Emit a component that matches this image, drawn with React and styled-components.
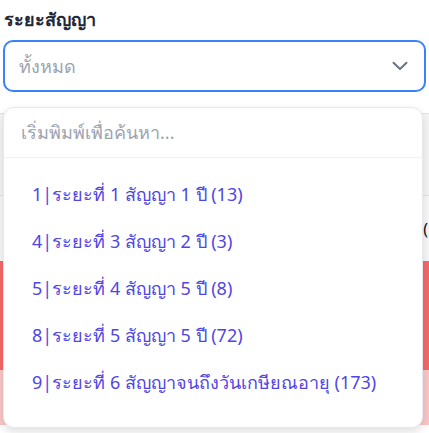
import React from "react";
import styled, { createGlobalStyle } from "styled-components";

const Global = createGlobalStyle`
  html, body { margin: 0; padding: 0; background: #ffffff; }
  body { font-family: "Noto Sans", sans-serif; }
  * { box-sizing: border-box; }
`;

const Page = styled.div`
  width: 429px;
  height: 433px;
  overflow: hidden;
  position: relative;
  padding: 5px 3px 0 3px;
`;

const Label = styled.div`
  font-size: 18px;
  font-weight: 600;
  color: #1f2937;
  line-height: 28px;
  padding-left: 1px;
  margin-bottom: 7px;
`;

const Field = styled.div`
  position: relative;
`;

const SelectBox = styled.div`
  height: 52px;
  width: 423px;
  border: 2px solid #3b82f6;
  border-radius: 10px;
  display: flex;
  align-items: center;
  justify-content: space-between;
  padding: 0 16px 0 14px;
  background: #fff;
`;

const Placeholder = styled.span`
  font-size: 18px;
  color: #9ca3af;
`;

const Chevron = () => (
  <svg width="16" height="10" viewBox="0 0 16 10" fill="none">
    <path d="M1.5 1.8 L8 8 L14.5 1.8" stroke="#6b7280" strokeWidth="2" strokeLinecap="round" strokeLinejoin="round" />
  </svg>
);

const Menu = styled.div`
  position: absolute;
  top: 67px;
  left: 0;
  width: 420px;
  height: 321px;
  background: #fff;
  border: 1px solid #e8e8f0;
  border-radius: 11px;
  box-shadow: 0 4px 10px rgba(0, 0, 0, 0.12);
  z-index: 2;
  overflow: hidden;
  display: flex;
  flex-direction: column;
`;

const Search = styled.div`
  height: 50px;
  display: flex;
  align-items: center;
  padding: 0 17px;
  font-size: 18px;
  color: #9ca3af;
  border-bottom: 1px solid #f0f0f3;
`;

const List = styled.div`
  padding-top: 13px;
  display: flex;
  flex-direction: column;
`;

const Item = styled.div`
  height: 47px;
  display: flex;
  align-items: center;
  padding-left: 28px;
  font-size: 18px;
  color: #4f46e5;
`;

const Table = styled.div`
  margin-top: 21px;
  margin-left: -3px;
  margin-right: -3px;
  display: flex;
  flex-direction: column;
`;

const Row = styled.div`
  height: ${(p) => p.$h}px;
  background: ${(p) => p.$bg};
  border-top: ${(p) => (p.$line ? "1px solid #e2e2e6" : "none")};
  display: flex;
  align-items: center;
  justify-content: space-between;
  padding: 0 1px;
  font-size: 16px;
  color: #111;
`;

const items = [
  "1|ระยะที่ 1 สัญญา 1 ปี (13)",
  "4|ระยะที่ 3 สัญญา 2 ปี (3)",
  "5|ระยะที่ 4 สัญญา 5 ปี (8)",
  "8|ระยะที่ 5 สัญญา 5 ปี (72)",
  "9|ระยะที่ 6 สัญญาจนถึงวันเกษียณอายุ (173)",
];

export default function App() {
  return (
    <Page>
      <Global />
      <Label>ระยะสัญญา</Label>
      <Field>
        <SelectBox>
          <Placeholder>ทั้งหมด</Placeholder>
          <Chevron />
        </SelectBox>
        <Menu>
          <Search>เริ่มพิมพ์เพื่อค้นหา...</Search>
          <List>
            {items.map((t) => (
              <Item key={t}>{t}</Item>
            ))}
          </List>
        </Menu>
      </Field>
      <Table>
        <Row $h={82} $bg="#f4f4f5" $line />
        <Row $h={66} $bg="#f7f7f8" $line>
          <span />
          <span>(</span>
        </Row>
        <Row $h={57} $bg="#f76868" />
        <Row $h={52} $bg="#f76868" />
        <Row $h={55} $bg="#fac6c6" />
      </Table>
    </Page>
  );
}
